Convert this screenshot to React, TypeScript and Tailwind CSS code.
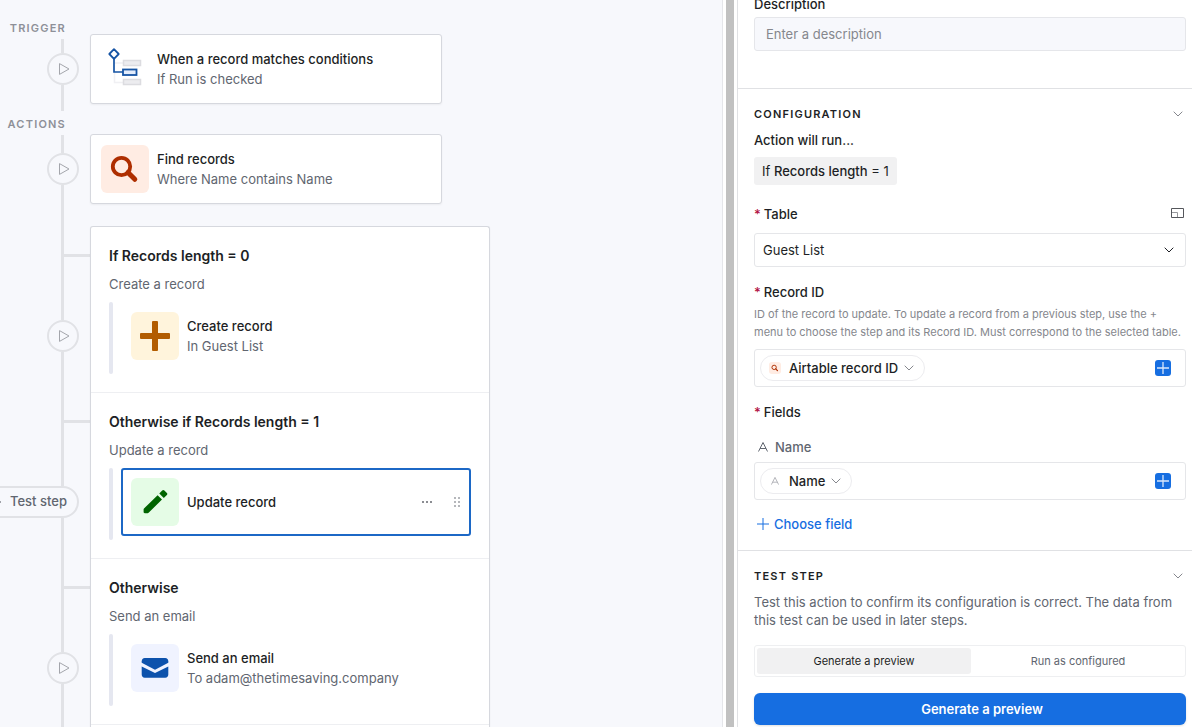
import { useState, type ReactNode } from "react";

interface Branch {
  title: string;
  summary: string;
  name: string;
  detail?: string;
  tile: string;
  icon: ReactNode;
  selected?: boolean;
}

const ConditionsIcon = () => (
  <svg width="48" height="48" viewBox="0 0 48 48" fill="none" className="shrink-0">
    <path d="M13.5 27v10.5H22M13.5 18H22" stroke="#f0f0f3" strokeWidth="1.5" />
    <rect x="22.5" y="15.5" width="17" height="5" fill="#ececef" stroke="#dcdce0" strokeWidth="1.5" />
    <rect x="22.5" y="34.5" width="17" height="5" fill="#ececef" stroke="#dcdce0" strokeWidth="1.5" />
    <path d="M13 13.5V27h9" stroke="#1654a4" strokeWidth="1.7" />
    <rect x="22" y="24.5" width="13.5" height="5.5" fill="#e3ecfb" stroke="#1654a4" strokeWidth="1.8" />
    <path d="M13 4.2 17.7 9 13 13.8 8.3 9Z" fill="#fff" stroke="#1654a4" strokeWidth="1.8" strokeLinejoin="round" />
  </svg>
);

const SearchIcon = ({ size }: { size: number }) => (
  <svg width={size} height={size} viewBox="0 0 48 48" fill="none" stroke="#ae2e00">
    <circle cx="20.5" cy="21.5" r="8.7" strokeWidth="3.8" />
    <path d="m27 27.5 6.8 6.8" strokeWidth="5" strokeLinecap="round" />
  </svg>
);

const PlusIcon = () => (
  <svg width="48" height="48" viewBox="0 0 48 48" fill="#b25c00">
    <rect x="9" y="21" width="30" height="6" rx="1" />
    <rect x="21" y="9" width="6" height="30" rx="1" />
  </svg>
);

const PencilIcon = () => (
  <svg width="48" height="48" viewBox="0 0 48 48" fill="#006400">
    <path d="M26.6 17.2 13 30.4c-.3.3-.4.6-.4 1V34c0 .7.5 1.2 1.2 1.2h2.8c.4 0 .7-.1 1-.4L31 21.5Z" />
    <path d="m28.3 15.4 2.9-2.9c.7-.7 1.5-.7 2.2 0l2.5 2.6c.6.6.6 1.3 0 2l-3.1 2.8Z" />
  </svg>
);

const MailIcon = () => (
  <svg width="48" height="48" viewBox="0 0 48 48" fill="#0d52ac">
    <path d="M10.7 17.3c0-1.8 1.2-3.2 3-3.2h20.6c1.8 0 3 1.4 3 3.2v1.5L24 25.8l-13.3-7Z" />
    <path d="M10.7 22.4 24 29.1l13.3-6.7v8.2c0 1.9-1.2 3.2-3 3.2H13.7c-1.8 0-3-1.3-3-3.2Z" />
  </svg>
);

const Chevron = ({ className }: { className: string }) => (
  <svg width="10" height="6" viewBox="0 0 10 6" fill="none" stroke="currentColor" className={className}>
    <path d="m.7.7 4.3 4.3L9.3.7" />
  </svg>
);

const TextTypeIcon = ({ size }: { size: number }) => (
  <svg width={size} height={size} viewBox="0 0 10 10" fill="none" stroke="currentColor">
    <path d="M.5 9.5 5 .5l4.5 9M2 6.5h6" strokeLinejoin="round" />
  </svg>
);

const branches: Branch[] = [
  {
    title: "If Records length = 0",
    summary: "Create a record",
    name: "Create record",
    detail: "In Guest List",
    tile: "bg-[#fff4dc]",
    icon: <PlusIcon />,
  },
  {
    title: "Otherwise if Records length = 1",
    summary: "Update a record",
    name: "Update record",
    tile: "bg-[#e5fce6]",
    icon: <PencilIcon />,
    selected: true,
  },
  {
    title: "Otherwise",
    summary: "Send an email",
    name: "Send an email",
    detail: "To adam@thetimesaving.company",
    tile: "bg-[#f0f3ff]",
    icon: <MailIcon />,
  },
];

const Line = ({ className }: { className: string }) => (
  <div className={`mr-[26px] w-[3px] shrink-0 bg-[#e1e2e6] ${className}`} />
);

const PlayButton = () => (
  <button
    aria-label="Test step"
    className="mr-[11px] flex size-8 shrink-0 items-center justify-center rounded-full border-2 border-[#e1e2e6] bg-[#f7f8fc] pl-0.5"
  >
    <svg width="12" height="12" viewBox="0 0 12 12" fill="none" stroke="#a3a5ab" strokeLinejoin="round">
      <path d="M1.5.6 11 6l-9.5 5.4Z" />
    </svg>
  </button>
);

const RailLabel = ({ children }: { children: ReactNode }) => (
  <h2 className="mr-6 mb-[3px] text-[11px] leading-4 font-semibold tracking-[0.11em] text-[#8e9098]">
    {children}
  </h2>
);

const Rail = () => (
  <div className="flex w-[90px] shrink-0 flex-col items-end pt-5">
    <RailLabel>TRIGGER</RailLabel>
    <Line className="h-3.5" />
    <PlayButton />
    <Line className="mb-[5px] h-[26px]" />
    <RailLabel>ACTIONS</RailLabel>
    <Line className="h-[18px]" />
    <PlayButton />
    <Line className="h-[42px]" />
    {branches.map((branch) => (
      <div key={branch.title} className="flex h-[166px] w-full shrink-0 flex-col items-end">
        <Line className="h-[27px]" />
        <div className="h-[3px] w-[29px] bg-[#e1e2e6]" />
        <Line className="h-[63px]" />
        {branch.selected ? (
          <button className="mr-[11px] flex h-8 shrink-0 items-center gap-2 rounded-full border-2 border-[#e1e2e6] bg-[#f7f8fc] px-2.5 text-[13px] font-medium whitespace-nowrap text-[#616670]">
            <svg width="12" height="12" viewBox="0 0 12 12" fill="none" stroke="#8e9098" strokeLinejoin="round">
              <path d="M1.5.6 11 6l-9.5 5.4Z" />
            </svg>
            Test step
          </button>
        ) : (
          <PlayButton />
        )}
        <Line className="h-[41px]" />
      </div>
    ))}
    <Line className="grow" />
  </div>
);

const StepText = ({ name, detail }: { name: string; detail?: string }) => (
  <div className="min-w-0 grow text-[13px] leading-5">
    <p className="font-medium text-[#1d1f25]">{name}</p>
    {detail && <p className="text-[#616670]">{detail}</p>}
  </div>
);

const StepCard = ({ children }: { children: ReactNode }) => (
  <div className="flex w-[352px] items-center gap-2 rounded-[3px] border border-[#d6d8de] bg-white p-2.5 shadow-xs">
    {children}
  </div>
);

const BranchSection = ({ branch }: { branch: Branch }) => (
  <section className="h-[166px] border-b border-[#eeeff2] px-[18px] pt-[19px]">
    <h3 className="text-sm leading-5 font-semibold text-[#1d1f25]">{branch.title}</h3>
    <p className="mt-2 text-[13px] leading-5 text-[#616670]">{branch.summary}</p>
    <div className="mt-2 flex h-[72px] items-start gap-2">
      <div className="h-full w-1 rounded-full bg-[#e5e7f0]" />
      <div
        className={`flex grow items-center gap-2 rounded-[3px] border-2 p-2 ${
          branch.selected ? "border-[#1c68c6]" : "border-transparent"
        }`}
      >
        <div className={`shrink-0 rounded-md ${branch.tile}`}>{branch.icon}</div>
        <StepText name={branch.name} detail={branch.detail} />
        {branch.selected && (
          <div className="flex items-center gap-5">
            <button aria-label="More options">
              <svg width="12" height="12" viewBox="0 0 12 12" fill="#8b8d92">
                <path d="M1 5h2v2H1zM5 5h2v2H5zM9 5h2v2H9z" />
              </svg>
            </button>
            <button aria-label="Drag step">
              <svg width="8" height="12" viewBox="0 0 8 12" fill="#b5b7bb">
                <path d="M1 1h2v2H1zM5 1h2v2H5zM1 5h2v2H1zM5 5h2v2H5zM1 9h2v2H1zM5 9h2v2H5z" />
              </svg>
            </button>
          </div>
        )}
      </div>
    </div>
  </section>
);

const SectionHeader = ({ title }: { title: string }) => (
  <div className="flex items-center justify-between pr-[3px]">
    <h2 className="text-[11px] leading-4 font-semibold tracking-[0.11em] text-[#1d1f25]">{title}</h2>
    <button aria-label={`Collapse ${title}`}>
      <Chevron className="text-[#85878d]" />
    </button>
  </div>
);

const Required = () => <span className="mr-[3px] text-[#b10f41]">*</span>;

const TokenField = ({ icon, token }: { icon: ReactNode; token: string }) => (
  <div className="flex h-[38px] items-center justify-between rounded-[3px] border border-[#e5e6e9] pr-3.5 pl-[5px]">
    <button className="flex h-[26px] items-center gap-1.5 rounded-full border border-[#ececef] pr-2.5 pl-2 font-medium text-[#1d1f25]">
      <span className="flex w-3.5 items-center text-[#a3a5ab]">{icon}</span>
      {token}
      <Chevron className="text-[#85878d]" />
    </button>
    <button aria-label="Insert value" className="rounded-[3px] bg-[#166ee1]">
      <svg width="16" height="16" viewBox="0 0 16 16" stroke="#d9e7fb">
        <path d="M2 8h12M8 2v12" strokeWidth="1.3" />
      </svg>
    </button>
  </div>
);

const modes = ["Generate a preview", "Run as configured"];

const PropertiesPanel = () => {
  const [mode, setMode] = useState(modes[0]);

  return (
    <aside className="w-[455px] shrink-0 overflow-hidden border-l border-[#e0e1e4] text-[13px] leading-5 text-[#1d1f25]">
      {/* Scrolled a little, so the label is cut at the top */}
      <div className="-mt-1.5 border-b border-[#e0e1e4] pr-1.5 pb-[37px] pl-4">
        <label htmlFor="description" className="block font-medium">
          Description
        </label>
        <input
          id="description"
          placeholder="Enter a description"
          className="mt-[3px] block h-[34px] w-full rounded-[3px] border border-[#e5e6ea] bg-[#f7f8fc] px-[11px] placeholder:text-[#85878d]"
        />
      </div>

      <div className="border-b border-[#e0e1e4] pt-[17px] pr-1.5 pb-4 pl-4">
        <SectionHeader title="CONFIGURATION" />
        <p className="mt-2 font-medium">Action will run...</p>
        <p className="mt-[7px] inline-block rounded-[3px] bg-[#f1f1f2] px-2 py-1">
          If <span className="font-medium">Records length</span> = 1
        </p>

        <div className="mt-[19px] flex items-center justify-between pr-0.5">
          <label htmlFor="table" className="font-medium">
            <Required />
            Table
          </label>
          <button aria-label="Expand table" className="pb-0.5">
            <svg width="13" height="10" viewBox="0 0 13 10" fill="none" stroke="#55575c">
              <path d="M.5.5h12v9H.5z" />
              <path d="M1 4.5h5.5V9" stroke="#96989c" />
            </svg>
          </button>
        </div>
        <div className="relative mt-[9px]">
          <select
            id="table"
            className="block h-[34px] w-full appearance-none rounded-[3px] border border-[#e5e6e9] bg-white px-2"
          >
            <option>Guest List</option>
          </select>
          <Chevron className="pointer-events-none absolute top-3.5 right-3" />
        </div>

        <h3 className="mt-[15px] font-medium">
          <Required />
          Record ID
        </h3>
        <p className="mt-[3px] mb-2 text-[11px] leading-[18px] text-[#85878d]">
          ID of the record to update. To update a record from a previous step, use the + menu to
          choose the step and its Record ID. Must correspond to the selected table.
        </p>
        <TokenField
          token="Airtable record ID"
          icon={
            <span className="rounded-[3px] bg-[#ffece3]">
              <SearchIcon size={12} />
            </span>
          }
        />

        <h3 className="mt-[15px] font-medium">
          <Required />
          Fields
        </h3>
        <p className="mt-[15px] mb-[5px] flex items-center gap-[7px] pl-1 font-medium text-[#616670]">
          <TextTypeIcon size={10} />
          Name
        </p>
        <TokenField
          token="Name"
          icon={
            <span className="pl-0.5">
              <TextTypeIcon size={8} />
            </span>
          }
        />

        <button className="mt-3.5 flex items-center gap-[5px] pl-[3px] font-medium text-[#166ee1]">
          <svg width="12" height="12" viewBox="0 0 12 12" stroke="currentColor">
            <path d="M0 6h12M6 0v12" />
          </svg>
          Choose field
        </button>
      </div>

      <div className="pt-[17px] pr-1.5 pl-4">
        <SectionHeader title="TEST STEP" />
        <p className="mt-[9px] leading-[18px] text-[#616670]">
          Test this action to confirm its configuration is correct. The data from this test can be
          used in later steps.
        </p>
        <div className="mt-4 flex h-8 rounded-[3px] border border-[#eeeff1] py-0.5 pl-0.5">
          {modes.map((item) => (
            <button
              key={item}
              aria-pressed={mode === item}
              onClick={() => setMode(item)}
              className={`flex-1 rounded-[3px] text-[11px] ${
                mode === item ? "bg-[#f1f1f2] text-[#1d1f25]" : "text-[#616670]"
              }`}
            >
              {item}
            </button>
          ))}
        </div>
        <button className="mt-4 h-8 w-full rounded-md bg-[#166ee1] pl-6 font-semibold text-white shadow-sm">
          Generate a preview
        </button>
      </div>
    </aside>
  );
};

export default function App() {
  return (
    <div className="flex h-screen overflow-hidden bg-white font-['Inter',sans-serif] antialiased">
      <main className="flex min-w-0 flex-1 overflow-hidden border-r border-[#e5e6ea] bg-[#f7f8fc]">
        <Rail />
        <div className="flex shrink-0 flex-col items-start pt-[34px]">
          <StepCard>
            <ConditionsIcon />
            <StepText name="When a record matches conditions" detail="If Run is checked" />
          </StepCard>
          <div className="mt-[30px]">
            <StepCard>
              <div className="rounded-md bg-[#ffece3]">
                <SearchIcon size={48} />
              </div>
              <StepText name="Find records" detail="Where Name contains Name" />
            </StepCard>
          </div>
          {/* Open at the bottom, the group runs on below the fold */}
          <div className="mt-[22px] w-[400px] grow rounded-t-[3px] border-x border-t border-[#d6d8de] bg-white shadow-xs">
            {branches.map((branch) => (
              <BranchSection key={branch.title} branch={branch} />
            ))}
          </div>
        </div>
      </main>
      <div className="mx-[3px] w-2 shrink-0 bg-[#c1c1c1]" />
      <PropertiesPanel />
    </div>
  );
}
